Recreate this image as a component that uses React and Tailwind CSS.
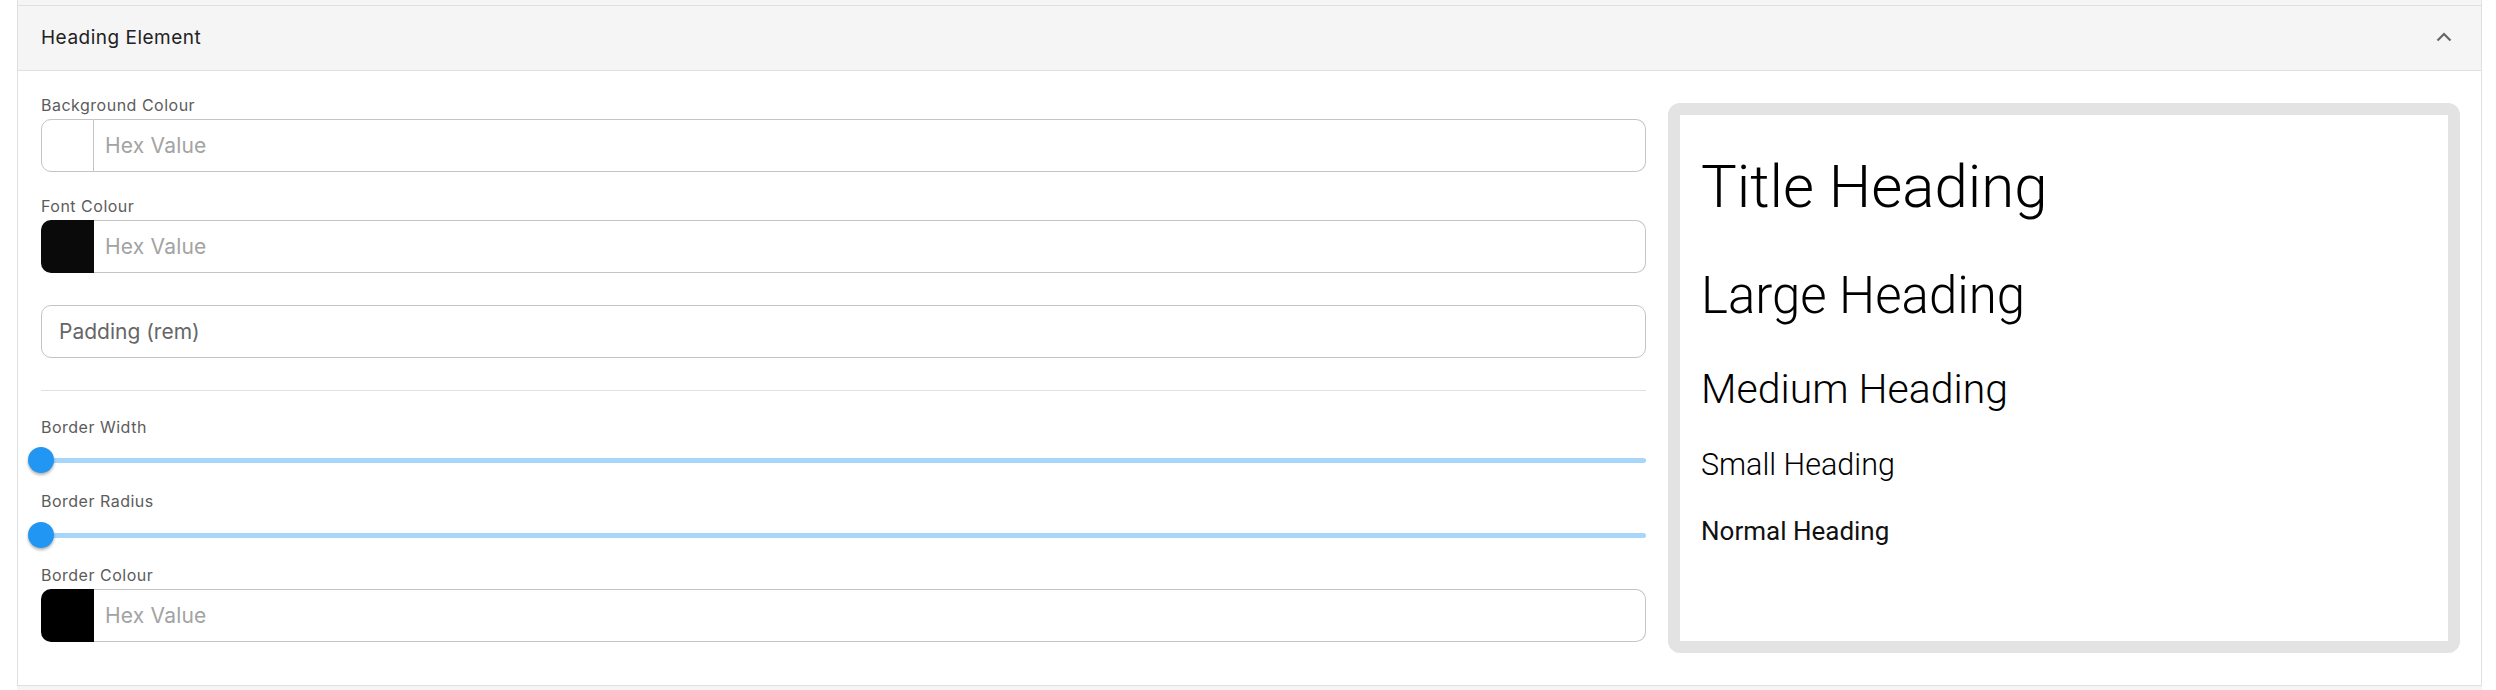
import React from "react";

const ColourField = ({ label, swatch, mt }) => {
  return (
    <div className={mt}>
      <label className="block text-[16px] leading-[20px] tracking-[0.5px] text-[#5c5c5c] mb-[4px]">{label}</label>
      <div className="flex h-[53px]">
        <div
          className={
            swatch === "white"
              ? "w-[53px] h-full rounded-l-[10px] border border-[#c4c4c4] bg-white"
              : "w-[53px] h-full rounded-l-[10px] " + swatch
          }
        />
        <input
          type="text"
          placeholder="Hex Value"
          className="flex-1 h-full rounded-r-[10px] border-y border-r border-[#c4c4c4] pl-[11px] text-[21px] tracking-[0.2px] outline-none placeholder:text-[#a3a3a3]"
        />
      </div>
    </div>
  );
};

const Slider = ({ mt }) => {
  return (
    <div className={"relative h-[26px] flex items-center " + mt}>
      <div className="w-full h-[5px] rounded-full bg-[#a8d5fa]" />
      <div className="absolute left-[-13px] top-0 w-[26px] h-[26px] rounded-full bg-[#2196f3] shadow-[0_2px_3px_rgba(0,0,0,0.3)]" />
    </div>
  );
};

export default function App() {
  return (
    <div className="min-h-[690px] bg-white pl-[17px] pr-[14px]" style={{ fontFamily: "Inter, 'Open Sans', sans-serif" }}>
      <div className="border-x border-b border-[#e0e0e0]">
        <div className="h-[6px] bg-[#f5f5f5] border-b border-[#e0e0e0]" />
        {/* accordion header */}
        <div className="h-[65px] bg-[#f5f5f5] border-b border-[#e0e0e0] flex items-center justify-between pl-[23px] pr-[29px] pb-[2px]">
          <span className="text-[19px] leading-none tracking-[0.5px] text-[#222]">Heading Element</span>
          <svg width="16" height="10" viewBox="0 0 16 10">
            <polyline points="1.5,8.5 8,2 14.5,8.5" fill="none" stroke="#666" strokeWidth="2.2" />
          </svg>
        </div>

        {/* body */}
        <div className="flex pl-[23px] pr-[21px] pt-[24px] pb-[32px] gap-[22px]">
          <div className="w-[1605px] shrink-0">
            <ColourField label="Background Colour" swatch="white" mt="" />
            <ColourField label="Font Colour" swatch="bg-[#0a0a0a]" mt="mt-[24px]" />
            <input
              type="text"
              placeholder="Padding (rem)"
              className="mt-[32px] w-full h-[53px] rounded-[10px] border border-[#c4c4c4] pl-[17px] text-[21px] outline-none placeholder:text-[#666]"
            />
            <hr className="mt-[32px] border-0 border-t border-[#e0e0e0]" />
            <label className="block mt-[26px] text-[16px] leading-[20px] tracking-[0.5px] text-[#5c5c5c]">Border Width</label>
            <Slider mt="mt-[10px]" />
            <label className="block mt-[18px] text-[16px] leading-[20px] tracking-[0.5px] text-[#5c5c5c]">Border Radius</label>
            <Slider mt="mt-[11px]" />
            <ColourField label="Border Colour" swatch="bg-black" mt="mt-[17px]" />
          </div>

          {/* preview */}
          <div className="flex-1 mt-[8px] h-[550px] rounded-[12px] bg-[#e3e3e3] p-[12px]">
            <div
              className="h-full bg-white pl-[21px] pt-[42px] text-black"
              style={{ fontFamily: "Roboto, 'Liberation Sans', sans-serif" }}
            >
              <div className="text-[60px] leading-none font-light">Title Heading</div>
              <div className="mt-[53px] text-[51px] leading-none font-light">Large Heading</div>
              <div className="mt-[48px] text-[41px] leading-none font-light">Medium Heading</div>
              <div className="mt-[40px] text-[30.5px] leading-none font-light">Small Heading</div>
              <div className="mt-[37px] text-[26px] leading-none text-[#111]">Normal Heading</div>
            </div>
          </div>
        </div>
      </div>
      <div className="h-[10px] bg-[#f5f5f5]" />
    </div>
  );
}
